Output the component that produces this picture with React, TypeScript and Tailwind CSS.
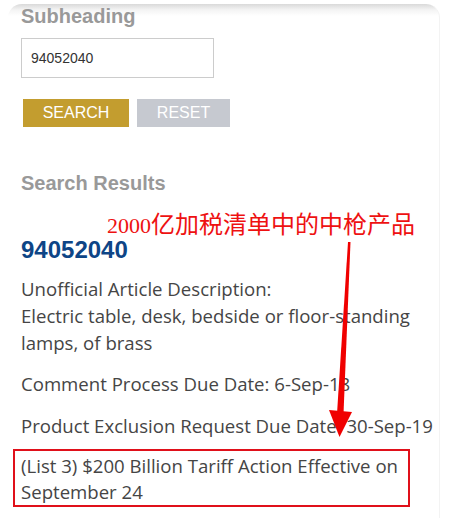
import React from 'react'

const body = 'text-[18.6px] leading-[27px] text-[#454545] font-["Open_Sans",sans-serif]'

export default function App() {
  return (
    <div className="w-[458px] h-[518px] bg-white overflow-hidden pt-[4px] pl-[8px]">
      <div className="relative w-[432px] h-[530px] rounded-t-[14px] border-r border-[#f3f3f3] bg-[linear-gradient(to_bottom,#d9d9d9_0px,#f4f4f4_6px,#ffffff_12px)] pl-[13px]">
        <h2 className='text-[20px] leading-[24px] font-bold text-[#999999] font-["Liberation_Sans",Arial,sans-serif]'>
          Subheading
        </h2>
        <input
          className='mt-[10px] block w-[193px] h-[40px] border border-[#cccccc] px-[9px] text-[14px] text-[#333333] font-["Liberation_Sans",Arial,sans-serif] outline-none'
          defaultValue="94052040"
        />
        <div className='mt-[21px] ml-[2px] flex gap-[8px] font-["Liberation_Sans",Arial,sans-serif]'>
          <button className="w-[106px] h-[28px] bg-[#c39d2f] text-white text-[16px]">SEARCH</button>
          <button className="w-[93px] h-[28px] bg-[#c6c9d0] text-white text-[16px]">RESET</button>
        </div>
        <h2 className='mt-[44px] text-[20px] leading-[24px] font-bold text-[#999999] font-["Liberation_Sans",Arial,sans-serif]'>
          Search Results
        </h2>
        <h3 className='mt-[41px] text-[24px] leading-[28px] font-bold text-[#0e4586] font-["Liberation_Sans",Arial,sans-serif]'>
          94052040
        </h3>
        <div className={`mt-[11px] ${body}`}>
          <p>
            Unofficial Article Description:
            <br />
            Electric table, desk, bedside or floor-standing lamps, of brass
          </p>
          <p className="mt-[14px]">Comment Process Due Date: 6-Sep-18</p>
          <p className="mt-[15px]">Product Exclusion Request Due Date: 30-Sep-19</p>
          <p className="mt-[10px] -ml-[8px] w-[397px] border-2 border-[#e0101a] pl-[6px] pt-[2px] leading-[26px]">
            (List 3) $200 Billion Tariff Action Effective on September 24
          </p>
        </div>

        <div className='absolute left-[99px] top-[205px] text-[24px] leading-[28px] text-[#ee1111] font-["Noto_Sans_CJK_SC",sans-serif] whitespace-nowrap'>
          <span className='text-[22px] font-["Liberation_Serif",serif]'>2000</span>亿加税清单中的中枪产品
        </div>
        <svg className="absolute left-[-8px] top-[-4px]" width="458" height="518" viewBox="0 0 458 518">
          <polygon points="348,242 350.5,242 343.5,414 337,414" fill="#f00000" />
          <polygon points="329,410 352,412 339.5,437" fill="#f00000" />
        </svg>
      </div>
    </div>
  )
}
